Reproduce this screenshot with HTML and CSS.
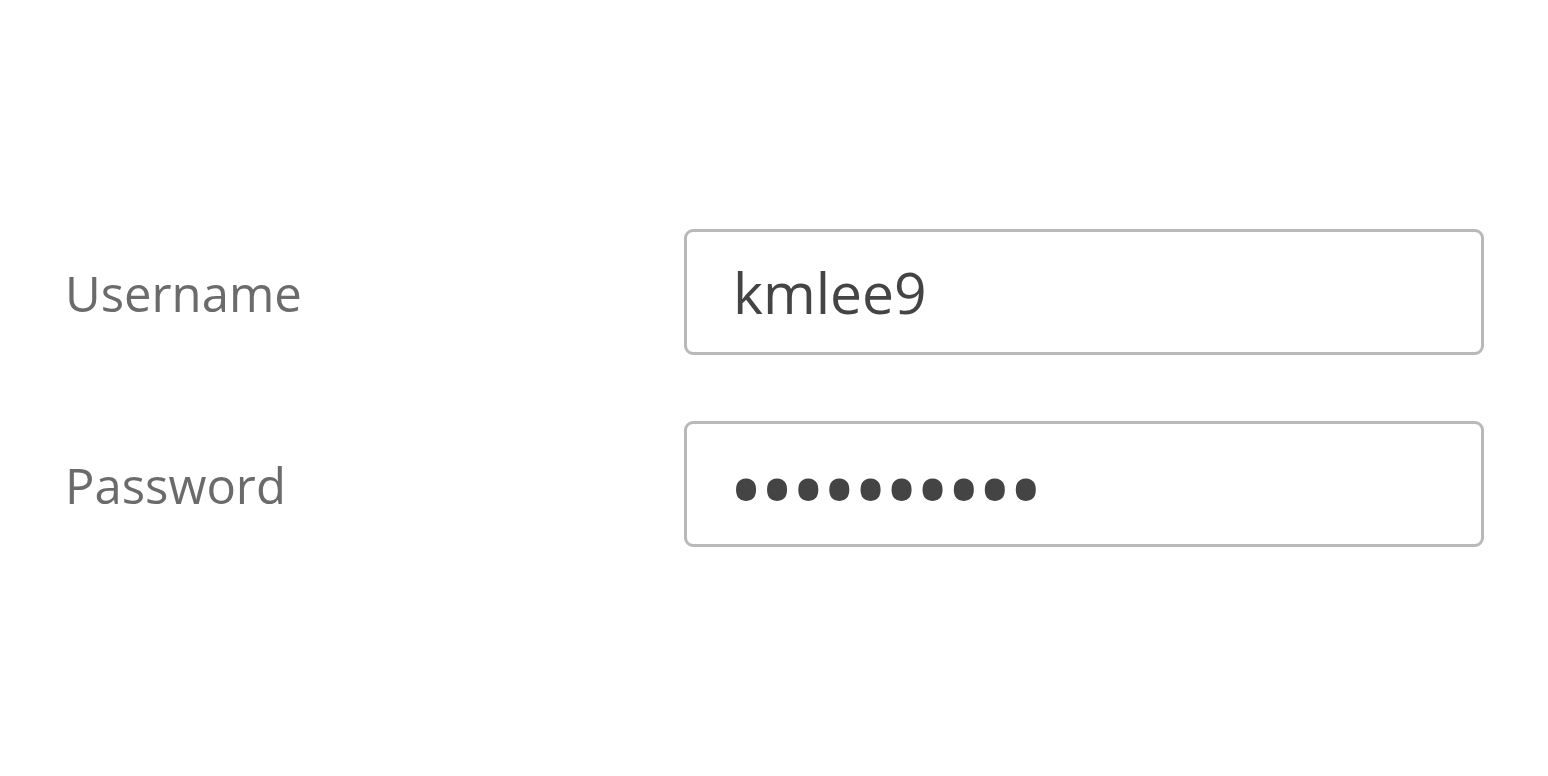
FILE: index.html
```html
<!DOCTYPE html>
<html lang="en">
<head>
<meta charset="utf-8">
<title>Login</title>
<link rel="stylesheet" href="styles.css">
</head>
<body>
<main class="page">
  <form class="form">
    <label class="label" for="username">Username</label>
    <input class="field" id="username" type="text" value="kmlee9">
    <label class="label" for="password">Password</label>
    <input class="field field-password" id="password" type="password" value="abcdefghij">
  </form>
</main>
</body>
</html>
```

FILE: styles.css
```css
html, body {
  margin: 0;
  padding: 0;
  background: #ffffff;
}

.page {
  height: 776px;
  box-sizing: border-box;
  padding: 0 64px;
  display: flex;
  align-items: center;
}

.form {
  width: 100%;
  display: grid;
  grid-template-columns: 620px 1fr;
  row-gap: 66px;
  align-items: center;
}

.label {
  font-family: "Open Sans", "Lato", sans-serif;
  font-size: 49px;
  color: #6b6b6b;
  padding-left: 1px;
  padding-top: 2px;
}

.field {
  box-sizing: border-box;
  width: 100%;
  height: 126px;
  margin: 0;
  padding: 0 46px;
  border: 3px solid #b9b9b9;
  border-radius: 9px;
  background: #ffffff;
  font-family: "Open Sans", "Lato", sans-serif;
  font-size: 57px;
  color: #444444;
  outline: none;
}

.field-password {
  font-size: 96px;
  letter-spacing: -5px;
  padding-left: 41px;
  padding-top: 6px;
}
```
